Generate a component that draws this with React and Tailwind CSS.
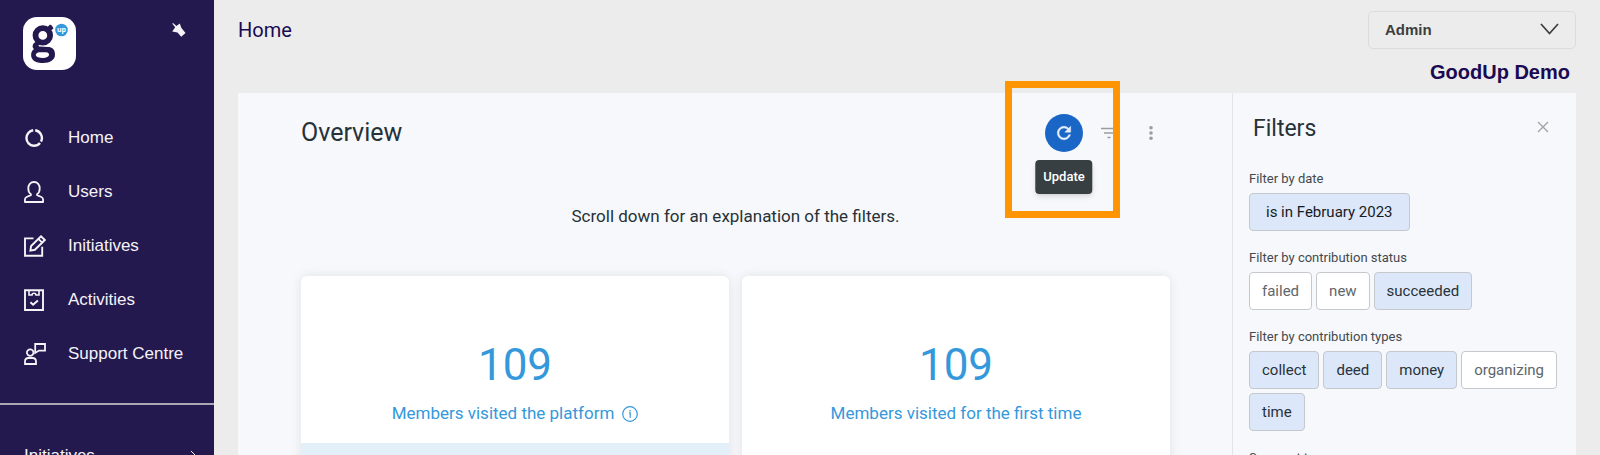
function HomeIcon() {
  return (
    <svg width="20" height="20" viewBox="0 0 20 20" fill="none" stroke="currentColor" strokeWidth="2.4">
      <path d="M9.200 2.300A7.800 7.800 0 0 0 9.600 17.800 M11.200 2.300A7.800 7.800 0 0 1 17 13.600 M16 15A7.800 7.800 0 0 1 9.600 17.800" />
    </svg>
  );
}

function UsersIcon() {
  return (
    <svg width="20" height="22" viewBox="0 0 20 22" fill="none" stroke="currentColor" strokeWidth="1.8" strokeLinejoin="round">
      <path d="M10 1C6.400 1 4.300 3.700 4.300 7.400c0 2.600 1 4.700 2.600 5.900v.9L2.600 16C1.400 16.600.9 17.500.9 18.800v2.200h18.200v-2.200c0-1.300-.5-2.200-1.700-2.800l-4.300-1.800v-.9c1.600-1.200 2.600-3.300 2.600-5.900C15.700 3.700 13.600 1 10 1z" />
    </svg>
  );
}

function InitiativesIcon() {
  return (
    <svg width="22" height="22" viewBox="0 0 22 22" fill="none" stroke="currentColor" strokeWidth="1.9">
      <path d="M9.500 3.400H1v17.400h17.200v-9" />
      <path d="M6.400 15.600l.7-4.600L17 1.300l3.800 3.700-9.900 9.800z M14.400 3.900l3.800 3.700" />
    </svg>
  );
}

function ActivitiesIcon() {
  return (
    <svg width="20" height="22" viewBox="0 0 20 22" fill="none" stroke="currentColor" strokeWidth="1.9">
      <path d="M1 1.200h18v19.800H1z" />
      <path d="M5 1.200v4.800h3c0-2.400 4-2.400 4 0h3V1.200" strokeWidth="1.6" />
      <path d="M6.400 13.200l2.700 2.500 4.800-4.300" strokeWidth="2" />
    </svg>
  );
}

function SupportIcon() {
  return (
    <svg width="22" height="22" viewBox="0 0 22 22" fill="none" stroke="currentColor" strokeWidth="1.8">
      <circle cx="6.200" cy="9.600" r="3.300" />
      <path d="M1 21v-2.400c0-2.400 1.400-3.600 3.400-3.600H8.600c2 0 3.400 1.200 3.400 3.600V21z" />
      <path d="M11.200 1h9.800v6.600h-6l-3.800 2.300z" />
    </svg>
  );
}

function Logo() {
  return (
    <svg width="53" height="53" viewBox="0 0 53 53" role="img" aria-label="GoodUp">
      <rect width="53" height="53" rx="14" fill="#fff" />
      <circle cx="19.800" cy="18.400" r="7.300" fill="none" stroke="#24194f" strokeWidth="5.800" />
      <g fill="#24194f" fillRule="evenodd">
        <path d="M23 11.500l4-4 2 1.200 1.500 2.800-4 3z" />
        <path d="M13.500 24.500C9.500 26 8.500 30 11 32 7.800 34 7.500 39 9 41.500 11 45 15 46 20 46c7 0 12-3 12-8.500C32 32 29 30 25 30l-8-.5c-2 0-1.500-2 0-2.500z M16 35.300h7c4.500.2 4.500 5.700-3 5.700-8.500 0-9-4.500-4-5.700z" />
      </g>
      <circle cx="38.500" cy="13" r="6.300" fill="#3498db" />
      <text x="38.500" y="15" textAnchor="middle" fontSize="7" fontWeight="700" fill="#fff" fontFamily="Open Sans, sans-serif">up</text>
    </svg>
  );
}

const NAV = [
  { label: "Home", Icon: HomeIcon },
  { label: "Users", Icon: UsersIcon },
  { label: "Initiatives", Icon: InitiativesIcon },
  { label: "Activities", Icon: ActivitiesIcon },
  { label: "Support Centre", Icon: SupportIcon },
];

const FILTERS = [
  { label: "Filter by contribution status", options: [["failed", false], ["new", false], ["succeeded", true]] },
  { label: "Filter by contribution types", options: [["collect", true], ["deed", true], ["money", true], ["organizing", false], ["time", true]] },
  { label: "Segment type", options: [] },
];

function Sidebar() {
  return (
    <aside className="flex w-[214px] shrink-0 flex-col bg-[#24194f] text-[17px] text-[#f4f3f7]">
      <div className="flex items-start justify-between pt-[17px] pr-7 pl-[23px]">
        <Logo />
        <button aria-label="Unpin menu" className="mt-[6px]">
          <svg width="14" height="14" viewBox="0 0 14 14" fill="currentColor">
            <path d="M.3.800L1 .1l3.400 3L7.800.500l1.500 4.300L13.500 10l-4.300 3.800L5.500 9.600.2 8.400l3-4.200z" />
          </svg>
        </button>
      </div>
      <nav className="mt-[41px] flex flex-col">
        {NAV.map(({ label, Icon }) => (
          <a key={label} href="#" className="flex h-[54px] items-center pl-6">
            <span className="flex w-11 shrink-0"><Icon /></span>
            {label}
          </a>
        ))}
      </nav>
      <div className="mt-[22px] border-t-2 border-[#aaa7b5]" />
      <button className="mt-[38px] flex items-center justify-between pr-[17px] pl-6 text-left">
        Initiatives
        <svg width="7" height="12" viewBox="0 0 7 12" fill="none" stroke="currentColor"><path d="M1 1l5 5-5 5" /></svg>
      </button>
    </aside>
  );
}

function StatCard({ value, label, info, footer }) {
  return (
    <article className="flex flex-1 flex-col overflow-hidden rounded-md bg-white pt-[60px] text-center text-[#3498db] shadow-[0_0_12px_rgba(0,0,0,0.09)]">
      <div className="text-[44px] leading-[58px]">{value}</div>
      <div className="mt-2 flex h-6 items-center justify-center gap-2 text-[17px]">
        {label}
        {info && (
          <svg width="16" height="16" viewBox="0 0 16 16" fill="none" stroke="currentColor" strokeWidth="1.2">
            <circle cx="8" cy="8" r="7.300" />
            <path d="M7 6.800h1.200v4.900M8 4v1.400" />
          </svg>
        )}
      </div>
      {footer && <div className="mt-[17px] h-20 bg-[#e3f0f9]" />}
    </article>
  );
}

function Toolbar() {
  return (
    <div className="flex items-center text-[#9a9c9f]">
      <div className="relative flex">
        <button aria-label="Update" className="flex size-[38px] items-center justify-center rounded-full bg-[#1a66c6] text-[#e8eefa]">
          <svg width="20" height="20" viewBox="0 0 24 24" fill="currentColor" stroke="currentColor" strokeWidth="0.6">
            <path d="M17.650 6.350C16.200 4.900 14.210 4 12 4c-4.420 0-7.990 3.580-7.990 8s3.570 8 7.990 8c3.730 0 6.840-2.550 7.730-6h-2.080c-.82 2.330-3.040 4-5.650 4-3.310 0-6-2.690-6-6s2.690-6 6-6c1.660 0 3.140.69 4.220 1.780L13 11h7V4l-2.350 2.350z" />
          </svg>
        </button>
        <span role="tooltip" className="absolute top-[46px] left-1/2 -translate-x-1/2 rounded-sm bg-[#373f43] px-2 py-[7px] text-[13px] leading-5 font-medium text-white shadow-md">Update</span>
        {/* highlight frame */}
        <span className="pointer-events-none absolute -top-[33px] -left-[40px] z-10 h-[137px] w-[115px] border-[7px] border-[#ff9500]" />
      </div>
      <button aria-label="Filters" className="ml-[18px]">
        <svg width="16" height="12" viewBox="0 0 16 12" stroke="currentColor" strokeWidth="1.500"><path d="M0 1.500h16M3 6h10M6.500 10.500h3" /></svg>
      </button>
      <button aria-label="More options" className="ml-8">
        <svg width="4" height="16" viewBox="0 0 4 16" fill="currentColor"><circle cx="2" cy="2.700" r="1.800" /><circle cx="2" cy="8" r="1.800" /><circle cx="2" cy="13.300" r="1.800" /></svg>
      </button>
    </div>
  );
}

function FilterPanel() {
  return (
    <aside className="w-[344px] shrink-0 border-l border-[#e2e4e8] px-4 pt-5">
      <div className="flex items-start justify-between pr-[11px] pl-1">
        <h2 className="text-[23px] leading-8">Filters</h2>
        <button aria-label="Close filters" className="mt-2 text-[#a0a4a8]">
          <svg width="12" height="12" viewBox="0 0 12 12" stroke="currentColor" strokeWidth="1.400"><path d="M1 1l10 10M11 1L1 11" /></svg>
        </button>
      </div>
      <section className="mt-6">
        <h3 className="text-[13px] leading-5 text-[#43494d]">Filter by date</h3>
        <button className="mt-1 h-[38px] rounded border border-[#c5c9ce] bg-[#dce8f9] px-4 text-[15px] text-[#161b1f]">is in February 2023</button>
      </section>
      {FILTERS.map(({ label, options }) => (
        <section key={label} className="mt-[17px]">
          <h3 className="text-[13px] leading-5 text-[#43494d]">{label}</h3>
          <div className="mt-1 flex flex-wrap gap-1">
            {options.map(([name, on]) => (
              <button key={name} aria-pressed={on} className={`h-[38px] rounded border border-[#c5c9ce] px-3 text-[15px] ${on ? "bg-[#dce8f9] text-[#293239]" : "bg-white text-[#60666a]"}`}>{name}</button>
            ))}
          </div>
        </section>
      ))}
    </aside>
  );
}

export default function App() {
  return (
    <div className="flex h-screen overflow-hidden bg-[#ececec] font-['Liberation_Sans',Arial,sans-serif]">
      <Sidebar />
      <main className="flex min-w-0 flex-1 flex-col pr-6 pl-6">
        <header className="flex h-[93px] shrink-0 items-start justify-between text-[#1a0a52]">
          <h1 className="pt-4 font-[Roboto,sans-serif] text-xl leading-7">Home</h1>
          <div className="flex flex-col items-end pt-[11px]">
            <div className="relative">
              <select aria-label="Role" className="h-[38px] w-52 appearance-none rounded-[5px] border border-[#dcdcdc] bg-transparent pl-4 text-[15px] font-bold text-[#3d3d3d]">
                <option>Admin</option>
              </select>
              <svg className="pointer-events-none absolute top-3 right-[17px] text-[#3d3d3d]" width="19" height="12" viewBox="0 0 19 12" fill="none" stroke="currentColor" strokeWidth="1.700"><path d="M1 1l8.500 9.500L18 1" /></svg>
            </div>
            <div className="pt-[9px] pr-[6px] text-xl leading-7 font-bold">GoodUp Demo</div>
          </div>
        </header>
        <div className="flex min-h-0 flex-1 bg-[#f7f8fb] font-[Roboto,sans-serif] text-[#263238]">
          <section className="min-w-0 flex-1 pt-[21px] pr-[62px] pl-[63px]">
            <div className="flex items-center justify-between pr-[17px]">
              <h2 className="text-[25px] leading-[38px]">Overview</h2>
              <Toolbar />
            </div>
            <p className="mt-[52px] text-center text-[17px] leading-6">Scroll down for an explanation of the filters.</p>
            <div className="mt-12 flex gap-[13px]">
              <StatCard value="109" label="Members visited the platform" info footer />
              <StatCard value="109" label="Members visited for the first time" />
            </div>
          </section>
          <FilterPanel />
        </div>
      </main>
    </div>
  );
}
